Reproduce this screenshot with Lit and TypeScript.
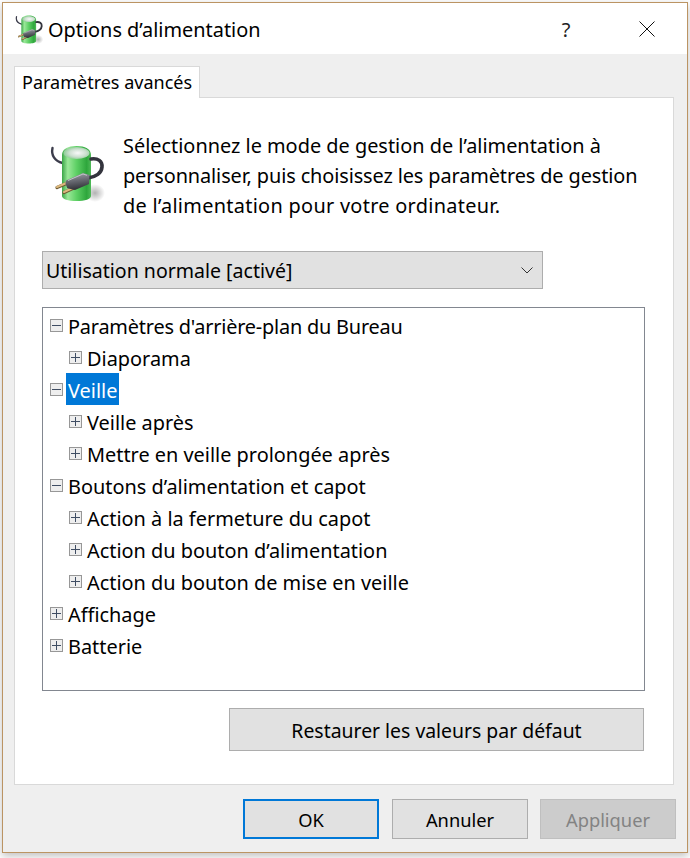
import { html, css, svg, LitElement } from 'lit';
import { customElement } from 'lit/decorators.js';

const batteryIcon = (id: string) => svg`
  <defs>
    <linearGradient id="${id}b" x1="0" x2="1" y1="0" y2="0">
      <stop offset="0" stop-color="#3aa547"/>
      <stop offset="0.2" stop-color="#9be899"/>
      <stop offset="0.5" stop-color="#5ed065"/>
      <stop offset="0.85" stop-color="#2ea63c"/>
      <stop offset="1" stop-color="#4fb958"/>
    </linearGradient>
    <linearGradient id="${id}p" x1="0" x2="0.2" y1="0" y2="1">
      <stop offset="0" stop-color="#a8aab0"/>
      <stop offset="0.5" stop-color="#6a6c74"/>
      <stop offset="1" stop-color="#33343a"/>
    </linearGradient>
    <radialGradient id="${id}t" cx="0.55" cy="0.5" r="0.55">
      <stop offset="0" stop-color="#f8f9f9"/>
      <stop offset="0.6" stop-color="#cbdfcf"/>
      <stop offset="1" stop-color="#8dcd95"/>
    </radialGradient>
    <radialGradient id="${id}s">
      <stop offset="0" stop-color="#000" stop-opacity=".3"/>
      <stop offset="1" stop-color="#000" stop-opacity="0"/>
    </radialGradient>
  </defs>
  <ellipse cx="95" cy="193" rx="10" ry="9" fill="url(#${id}s)"/>
  <path d="M52.500 148c-1.500 7 2 13 10 15" fill="none" stroke="#3c3d4c" stroke-width="2.400" stroke-linecap="round"/>
  <path d="M62 155c0-6 6-9 14.500-9s14.500 3 14.500 9v41c0 3-6 5-14.500 5s-14.500-2-14.500-5z" fill="url(#${id}b)"/>
  <ellipse cx="76.500" cy="153" rx="13" ry="6" fill="url(#${id}t)"/>
  <path d="M91 159c7-1 11.500 2 11 8-.500 6-6 10-14 11" fill="none" stroke="#33343d" stroke-width="3.600" stroke-linecap="round"/>
  <path d="M57 187.500l14-6M64 192.500l12-5.500" stroke="#6f5c33" stroke-width="3.200" stroke-linecap="round"/>
  <path d="M57 187l14-6M64 192l12-5.500" stroke="#dcb87e" stroke-width="2" stroke-linecap="round"/>
  <path d="M66 180.500l17-7.500 6.500 2-.500 9-14 6-7.700-1.700-1.800-4.800z" fill="url(#${id}p)"/>
  <path d="M68 180.500l15-6.500 4 1.300" fill="none" stroke="#c2c4c8" stroke-width="1"/>
`;

const rows = [
  { level: 0, open: true, label: "Paramètres d'arrière-plan du Bureau", tight: true },
  { level: 1, open: false, label: 'Diaporama' },
  { level: 0, open: true, label: 'Veille', selected: true },
  { level: 1, open: false, label: 'Veille après' },
  { level: 1, open: false, label: 'Mettre en veille prolongée après' },
  { level: 0, open: true, label: 'Boutons d’alimentation et capot' },
  { level: 1, open: false, label: 'Action à la fermeture du capot' },
  { level: 1, open: false, label: 'Action du bouton d’alimentation' },
  { level: 1, open: false, label: 'Action du bouton de mise en veille' },
  { level: 0, open: false, label: 'Affichage' },
  { level: 0, open: false, label: 'Batterie' },
];

@customElement('app-root')
export class AppRoot extends LitElement {
  static styles = css`
    :host {
      display: block;
      width: 690px;
      height: 858px;
      background: #fff;
      font-family: "Noto Sans", "Liberation Sans", sans-serif;
      font-size: 18px;
      color: #000;
      overflow: hidden;
    }
    .window {
      box-sizing: border-box;
      width: 686px;
      height: 851px;
      margin: 2px 0 0 2px;
      border: 1px solid #bb9463;
      background: #efefef;
      box-shadow: 0 3px 8px rgba(0, 0, 0, 0.25);
      display: flex;
      flex-direction: column;
    }
    .titlebar {
      height: 51px;
      flex: none;
      background: #fff;
      display: flex;
      align-items: center;
      padding: 1px 0 0 12px;
      box-sizing: border-box;
    }
    .title-icon {
      width: 29px;
      height: 29px;
      flex: none;
    }
    .title {
      margin-left: 4px;
      font-size: 19.9px;
      flex: 1;
    }
    .help {
      width: 20px;
      text-align: center;
      font-size: 20px;
      color: #222;
      margin-right: 63px;
    }
    .close {
      width: 16px;
      height: 16px;
      margin-right: 32px;
      flex: none;
    }
    .content {
      flex: 1;
      padding: 12px 13px 0 11px;
      display: flex;
      flex-direction: column;
    }
    .tab {
      box-sizing: border-box;
      align-self: flex-start;
      width: 186px;
      height: 32px;
      border: 1px solid #d9d9d9;
      border-bottom: none;
      background: #fff;
      margin-bottom: -1px;
      position: relative;
      z-index: 1;
      padding-left: 7px;
      line-height: 30px;
      white-space: nowrap;
    }
    .panel {
      box-sizing: border-box;
      width: 660px;
      height: 688px;
      border: 1px solid #d9d9d9;
      background: #fff;
      padding: 33px 28px 0 27px;
    }
    .intro {
      display: flex;
      height: 120px;
    }
    .intro svg {
      width: 56px;
      height: 57px;
      flex: none;
      margin: 14px 0 0 8px;
    }
    .intro p {
      margin: 0 0 0 17px;
      font-size: 19.9px;
      line-height: 30px;
      white-space: nowrap;
    }
    .intro .line {
      display: block;
    }
    .intro .second {
      letter-spacing: -0.11px;
    }
    .intro .third {
      letter-spacing: 0.3px;
    }
    .combo {
      box-sizing: border-box;
      width: 501px;
      height: 38px;
      border: 1px solid #adadad;
      background: #e1e1e1;
      display: flex;
      align-items: center;
      justify-content: space-between;
      padding: 1px 9px 0 3px;
      font-size: 19.55px;
    }
    .combo svg {
      width: 12px;
      height: 7px;
    }
    .tree {
      box-sizing: border-box;
      width: 603px;
      height: 384px;
      margin-top: 18px;
      border: 1px solid #828790;
      padding: 1px 0 0 7px;
    }
    .row {
      height: 32px;
      display: flex;
      font-size: 19.9px;
      white-space: nowrap;
    }
    .row.child {
      padding-left: 19px;
    }
    .row svg {
      width: 13px;
      height: 13px;
      flex: none;
      margin: 10px 3px 0 0;
    }
    .label {
      height: 32px;
      line-height: 36px;
      padding: 0 2px;
    }
    .label.tight {
      letter-spacing: -0.2px;
    }
    .label.selected {
      background: #0078d7;
      color: #fff;
    }
    .restore-line {
      display: flex;
      justify-content: flex-end;
      margin-top: 17px;
      padding-right: 1px;
    }
    button {
      box-sizing: border-box;
      font: inherit;
      font-size: 19.4px;
      color: #000;
      background: #e1e1e1;
      border: 1px solid #adadad;
      padding: 0;
    }
    .restore {
      width: 415px;
      height: 43px;
      padding-top: 2px;
    }
    .actions {
      display: flex;
      gap: 13px;
      padding: 14px 0 0 229px;
    }
    .actions button {
      flex: none;
      width: 136px;
      height: 40px;
      font-size: 18.3px;
    }
    .actions .ok {
      border: 2px solid #0078d7;
    }
    .actions .disabled {
      background: #ccc;
      border-color: #bfbfbf;
      color: #838383;
      margin-left: -1px;
    }
  `;

  expander(open: boolean) {
    return html`<svg viewBox="0 0 13 13">
      <rect x=".5" y=".5" width="12" height="12" fill="#eeeeee" stroke="#979797"/>
      <path d=${open ? 'M2 6.500h9' : 'M2 6.500h9M6.500 2v9'} stroke="#3f4d63" fill="none"/>
    </svg>`;
  }

  render() {
    return html`
      <div class="window">
        <div class="titlebar">
          <svg class="title-icon" viewBox="50 145 56 57">${batteryIcon('a')}</svg>
          <div class="title">Options d’alimentation</div>
          <div class="help">?</div>
          <svg class="close" viewBox="0 0 16 16">
            <path d="M.5.500l15 15M15.500.500l-15 15" stroke="#111" fill="none"/>
          </svg>
        </div>
        <div class="content">
          <div class="tab">Paramètres avancés</div>
          <div class="panel">
            <div class="intro">
              <svg viewBox="50 145 56 57">${batteryIcon('b')}</svg>
              <p>
                <span class="line">Sélectionnez le mode de gestion de l’alimentation à</span>
                <span class="line second">personnaliser, puis choisissez les paramètres de gestion</span>
                <span class="line third">de l’alimentation pour votre ordinateur.</span>
              </p>
            </div>
            <div class="combo">
              <span>Utilisation normale [activé]</span>
              <svg viewBox="0 0 12 7"><path d="M.5.500L6 6l5.500-5.500" stroke="#333" fill="none"/></svg>
            </div>
            <div class="tree">
              ${rows.map(
                (r) => html`
                  <div class="row ${r.level ? 'child' : ''}">
                    ${this.expander(r.open)}
                    <span class="label ${r.selected ? 'selected' : ''} ${r.tight ? 'tight' : ''}">${r.label}</span>
                  </div>
                `
              )}
            </div>
            <div class="restore-line">
              <button class="restore">Restaurer les valeurs par défaut</button>
            </div>
          </div>
          <div class="actions">
            <button class="ok">OK</button>
            <button>Annuler</button>
            <button class="disabled">Appliquer</button>
          </div>
        </div>
      </div>
    `;
  }
}
